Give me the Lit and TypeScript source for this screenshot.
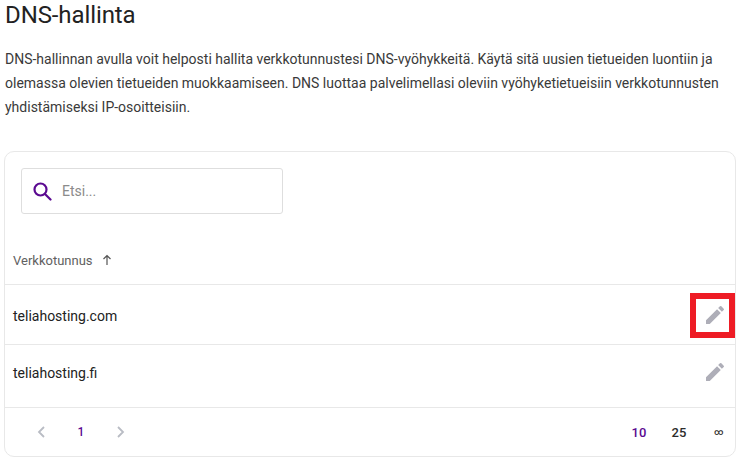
import { LitElement, html, css } from "lit";
import { customElement } from "lit/decorators.js";

const pencil = html`<svg class="pencil" viewBox="0 0 24 24" width="24" height="24"><path d="M3 17.25V21h3.75L17.81 9.94l-3.75-3.75L3 17.25zM20.71 7.04a1 1 0 0 0 0-1.41l-2.34-2.34a1 1 0 0 0-1.41 0l-1.83 1.83 3.75 3.75 1.83-1.83z"/></svg>`;

@customElement("app-root")
export class AppRoot extends LitElement {
  static styles = css`
    :host { display: block; width: 743px; height: 465px; overflow: hidden; background: #fff; font-family: Roboto, sans-serif; color: #2c2c2c; position: relative; }
    h1 { margin: 0; padding: 0 0 0 5px; font-size: 24px; font-weight: 400; line-height: 30px; color: #222; letter-spacing: -0.1px; }
    .intro { margin: 17px 0 0; padding: 0 5px; font-size: 14px; line-height: 24px; color: #3a3a3a; height: 72px; }
    .card { margin: 32px 7px 0 4px; height: 306px; box-sizing: border-box; border: 1px solid #e8e8e8; border-radius: 10px; display: flex; flex-direction: column; }
    .search-wrap { padding: 16px 16px 0; height: 46px; }
    .search { width: 262px; height: 46px; box-sizing: border-box; border: 1px solid #dedede; border-radius: 3px; display: flex; align-items: center; padding-left: 10px; gap: 10px; }
    .search svg { fill: none; stroke: #5b0a91; stroke-width: 2.2; stroke-linecap: round; flex: none; }
    .search span { font-size: 14px; color: #8b8b8b; }
    .head { height: 71px; box-sizing: border-box; padding: 22px 0 0 8px; display: flex; align-items: center; gap: 8px; font-size: 13px; color: #616161; border-bottom: 1px solid #e8e8e8; }
    .head svg { fill: none; stroke: #555; stroke-width: 1.2; }
    .row { display: flex; align-items: center; justify-content: space-between; padding: 0 8px; font-size: 14px; color: #222; border-bottom: 1px solid #e8e8e8; box-sizing: border-box; }
    .row span { padding-top: 2px; }
    .r1 { height: 60px; padding-top: 1px; }
    .r2 { height: 63px; padding-bottom: 8px; }
    .pencil { fill: #aeaeb8; display: block; }
    .pager { flex: 1; display: flex; align-items: center; justify-content: space-between; padding: 0 4px 0 24px; font-size: 13px; font-weight: 500; }
    .left, .right { display: flex; align-items: center; gap: 16px; }
    .cell { width: 24px; display: flex; justify-content: center; }
    .left svg { fill: none; stroke: #b9bcc4; stroke-width: 1.8; display: block; }
    .left .num { color: #5b0a91; font-size: 12px; }
    .on { color: #5b0a91; }
    .mid { color: #2c2c2c; }
    .inf { font-size: 9px; color: #333; }
    .mark { position: absolute; left: 690px; top: 293px; width: 45px; height: 45px; box-sizing: border-box; border: 6px solid #ee1c25; }
  `;

  render() {
    return html`
      <h1>DNS-hallinta</h1>
      <p class="intro">DNS-hallinnan avulla voit helposti hallita verkkotunnustesi DNS-vyöhykkeitä. Käytä sitä uusien tietueiden luontiin ja olemassa olevien tietueiden muokkaamiseen. DNS luottaa palvelimellasi oleviin vyöhyketietueisiin verkkotunnusten yhdistämiseksi IP-osoitteisiin.</p>
      <section class="card">
        <div class="search-wrap">
          <div class="search">
            <svg viewBox="0 0 20 20" width="20" height="20"><circle cx="8.500" cy="8.500" r="6"/><path d="M13 13l5.500 5.500"/></svg>
            <span>Etsi...</span>
          </div>
        </div>
        <div class="head">
          <span>Verkkotunnus</span>
          <svg viewBox="0 0 12 12" width="12" height="12"><path d="M6 11V1.500M2.500 5L6 1.500 9.500 5"/></svg>
        </div>
        <div class="row r1"><span>teliahosting.com</span>${pencil}</div>
        <div class="row r2"><span>teliahosting.fi</span>${pencil}</div>
        <div class="pager">
          <div class="left">
            <span class="cell"><svg viewBox="0 0 10 14" width="10" height="14"><path d="M8 2L3 7l5 5"/></svg></span>
            <span class="cell num">1</span>
            <span class="cell"><svg viewBox="0 0 10 14" width="10" height="14"><path d="M2 2l5 5-5 5"/></svg></span>
          </div>
          <div class="right">
            <span class="cell on">10</span><span class="cell mid">25</span><span class="cell inf">∞</span>
          </div>
        </div>
      </section>
      <div class="mark"></div>
    `;
  }
}
